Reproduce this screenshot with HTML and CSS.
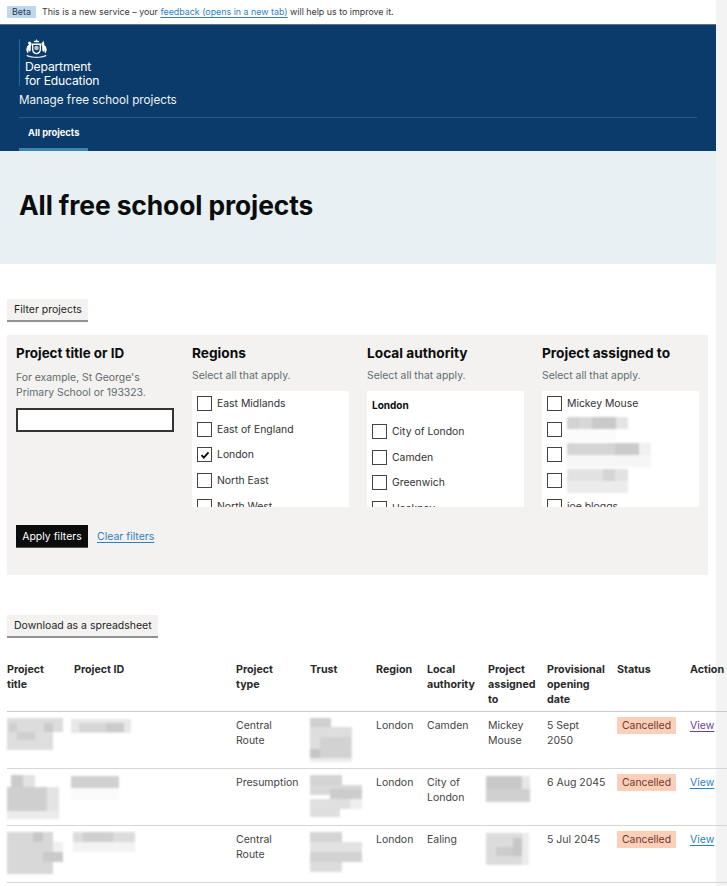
FILE: index.html
```html
<!DOCTYPE html>
<html lang="en">
<head>
<meta charset="utf-8">
<title>All free school projects</title>
<link rel="stylesheet" href="styles.css">
</head>
<body>
<div class="page">
  <div class="phase"><span class="tag">Beta</span><span>This is a new service – your <a class="link" href="#">feedback (opens in a new tab)</a> will help us to improve it.</span></div>
  <header class="masthead">
    <div class="logo">
      <svg class="crest" viewBox="0 0 24 20" aria-hidden="true"><g fill="#fff"><path d="M9.500 3.500L9 1.500l1.500.8L12 .3l1.500 2 1.500-.8-.5 2z"/><path d="M8 5.500h8v5.500c0 2.500-2 4-4 4.500-2-.5-4-2-4-4.500z" fill="none" stroke="#fff" stroke-width="1.400"/><circle cx="12" cy="9.500" r="2.400" opacity=".7"/><path d="M7 5L5.500 2.800 3.600 3l-.6 1.800 1.200.8L2 8l-.8 3.500L2.500 15l1.200-1-.5-2.500 1.300 1.800L6 12V8.500zM17 5l2.500-3.500.2 2.500 1 1.500-1 .8L22 8l.8 3.500-1.300 3.500-1.200-1 .5-2.500-1.300 1.800L18 12V8.500z"/><path d="M2 16.500c3 1.500 6.500 2.200 10 2.200s7-.7 10-2.200l.5 1.500c-3 1.500-7 2-10.500 2s-7.500-.5-10.500-2z" opacity=".9"/></g></svg>
      <div class="logo-text">Department<br>for Education</div>
    </div>
    <div class="service">Manage free school projects</div>
    <nav class="nav"><a class="nav-item" href="#">All projects</a></nav>
  </header>
  <div class="band"><h1 class="title">All free school projects</h1></div>
  <main class="main">
    <button class="btn-grey filter-toggle">Filter projects</button>
    <section class="filters">
      <div class="filter-cols">
        <div class="col col-search">
          <h2 class="col-h col-h-first">Project title or ID</h2>
          <p class="hint hint-two">For example, St George's<br>Primary School or 193323.</p>
          <input class="search" type="text" aria-label="Project title or ID">
        </div>
        <div class="col">
          <h2 class="col-h">Regions</h2>
          <p class="hint">Select all that apply.</p>
          <div class="box">
            <label class="opt"><span class="check"></span>East Midlands</label>
            <label class="opt"><span class="check"></span>East of England</label>
            <label class="opt"><span class="check"><svg class="tick" viewBox="0 0 10 10"><path d="M1.500 5.200l2.300 2.500L8.500 2.300" fill="none" stroke="#0b0c0c" stroke-width="1.800"/></svg></span>London</label>
            <label class="opt"><span class="check"></span>North East</label>
            <label class="opt"><span class="check"></span>North West</label>
          </div>
        </div>
        <div class="col">
          <h2 class="col-h">Local authority</h2>
          <p class="hint">Select all that apply.</p>
          <div class="box">
            <div class="group">London</div>
            <label class="opt"><span class="check"></span>City of London</label>
            <label class="opt"><span class="check"></span>Camden</label>
            <label class="opt"><span class="check"></span>Greenwich</label>
            <label class="opt"><span class="check"></span>Hackney</label>
          </div>
        </div>
        <div class="col">
          <h2 class="col-h">Project assigned to</h2>
          <p class="hint">Select all that apply.</p>
          <div class="box">
            <label class="opt"><span class="check"></span>Mickey Mouse</label>
            <label class="opt"><span class="check"></span><svg class="mosaic" width="62" height="24" viewBox="0 0 62 24"><rect width="12" height="12" fill="#d2d2d2"/><rect x="12" width="13" height="12" fill="#d8d8d8"/><rect x="25" width="24" height="12" fill="#c9c9c9"/><rect x="49" width="12" height="12" fill="#e4e4e4"/><rect y="12" width="49" height="12" fill="#fbfbfb"/></svg></label>
            <label class="opt"><span class="check"></span><svg class="mosaic" width="86" height="24" viewBox="0 0 86 24"><rect width="48" height="12" fill="#d4d4d4"/><rect x="48" width="24" height="12" fill="#cbcbcb"/><rect x="72" width="12" height="12" fill="#f0f0f0"/><rect y="12" width="84" height="12" fill="#f6f6f6"/></svg></label>
            <label class="opt"><span class="check"></span><svg class="mosaic" width="62" height="24" viewBox="0 0 62 24"><rect width="36" height="12" fill="#e2e2e2"/><rect x="36" width="12" height="12" fill="#d4d4d4"/><rect x="48" width="13" height="12" fill="#e2e2e2"/><rect y="12" width="61" height="12" fill="#ececec"/></svg></label>
            <label class="opt"><span class="check"></span>joe bloggs</label>
          </div>
        </div>
      </div>
      <div class="actions">
        <button class="btn-black">Apply filters</button>
        <a class="link" href="#">Clear filters</a>
      </div>
    </section>
    <button class="btn-grey download">Download as a spreadsheet</button>
    <table class="projects">
      <colgroup><col class="c1"><col class="c2"><col class="c3"><col class="c4"><col class="c5"><col class="c6"><col class="c7"><col class="c8"><col class="c9"><col class="c10"></colgroup>
      <thead>
        <tr><th>Project title</th><th>Project ID</th><th>Project type</th><th>Trust</th><th>Region</th><th>Local authority</th><th>Project assigned to</th><th>Provisional opening date</th><th>Status</th><th>Action</th></tr>
      </thead>
      <tbody>
        <tr>
          <td><svg class="mosaic" width="56" height="32" viewBox="0 0 56 32"><rect width="56" height="14" fill="#dcdcdc"/><rect x="2" y="5" width="8" height="9" fill="#cfcfcf"/><rect x="37" y="5" width="9" height="9" fill="#cbcbcb"/><rect y="14" width="46" height="18" fill="#dedede"/><rect x="10" y="14" width="18" height="8" fill="#d0d0d0"/></svg></td>
          <td><svg class="mosaic shift-id" width="60" height="14" viewBox="0 0 60 14"><rect width="60" height="14" fill="#e8e8e8"/><rect x="8" y="4" width="45" height="9" fill="#d6d6d6"/><rect x="35" y="4" width="18" height="9" fill="#cbcbcb"/></svg></td>
          <td>Central Route</td>
          <td><svg class="mosaic" width="42" height="44" viewBox="0 0 42 44"><rect width="21" height="9" fill="#cfcfcf"/><rect y="9" width="42" height="31" fill="#dedede"/><rect x="10" y="19" width="31" height="21" fill="#d2d2d2"/><rect y="31" width="10" height="9" fill="#c6c6c6"/><rect y="40" width="42" height="4" fill="#ececec"/></svg></td>
          <td>London</td><td>Camden</td><td>Mickey Mouse</td><td>5 Sept 2050</td>
          <td><span class="status">Cancelled</span></td>
          <td><a class="link visited" href="#">View</a></td>
        </tr>
        <tr>
          <td><svg class="mosaic" width="52" height="44" viewBox="0 0 52 44"><rect x="4" width="12" height="12" fill="#cbcbcb"/><rect x="16" width="12" height="12" fill="#e2e2e2"/><rect y="12" width="40" height="24" fill="#cfcfcf"/><rect x="40" y="12" width="12" height="24" fill="#e4e4e4"/><rect y="36" width="52" height="8" fill="#ebebeb"/></svg></td>
          <td><svg class="mosaic shift-id" width="48" height="24" viewBox="0 0 48 24"><rect width="48" height="12" fill="#d0d0d0"/><rect y="12" width="48" height="12" fill="#fafafa"/></svg></td>
          <td>Presumption</td>
          <td><svg class="mosaic" width="52" height="42" viewBox="0 0 52 42"><rect width="32" height="10" fill="#d4d4d4"/><rect y="10" width="52" height="10" fill="#d8d8d8"/><rect x="20" y="14" width="32" height="10" fill="#cccccc"/><rect y="24" width="40" height="10" fill="#e0e0e0"/><rect x="40" y="24" width="12" height="10" fill="#eeeeee"/><rect y="34" width="30" height="8" fill="#dedede"/></svg></td>
          <td>London</td><td>City of London</td>
          <td><svg class="mosaic shift-as" width="44" height="26" viewBox="0 0 44 26"><rect width="36" height="13" fill="#c9c9c9"/><rect x="36" width="8" height="13" fill="#e6e6e6"/><rect y="13" width="44" height="13" fill="#d0d0d0"/></svg></td>
          <td>6 Aug 2045</td>
          <td><span class="status">Cancelled</span></td>
          <td><a class="link" href="#">View</a></td>
        </tr>
        <tr>
          <td><svg class="mosaic" width="56" height="42" viewBox="0 0 56 42"><rect width="46" height="42" fill="#d8d8d8"/><rect x="26" y="0" width="10" height="10" fill="#c8c8c8"/><rect x="36" y="20" width="20" height="10" fill="#cacaca"/><rect x="46" y="10" width="10" height="10" fill="#f0f0f0"/></svg></td>
          <td><svg class="mosaic shift-id2" width="62" height="20" viewBox="0 0 62 20"><rect width="62" height="10" fill="#dcdcdc"/><rect x="10" width="30" height="10" fill="#cfcfcf"/><rect y="10" width="62" height="10" fill="#f3f3f3"/></svg></td>
          <td>Central Route</td>
          <td><svg class="mosaic" width="52" height="42" viewBox="0 0 52 42"><rect width="32" height="10" fill="#d4d4d4"/><rect y="10" width="52" height="10" fill="#e2e2e2"/><rect y="20" width="52" height="10" fill="#d2d2d2"/><rect y="30" width="32" height="10" fill="#dcdcdc"/></svg></td>
          <td>London</td><td>Ealing</td>
          <td><svg class="mosaic shift-as" width="43" height="32" viewBox="0 0 43 32"><rect width="36" height="32" fill="#dcdcdc"/><rect x="27" y="5" width="9" height="18" fill="#c6c6c6"/><rect x="10" y="14" width="17" height="9" fill="#cccccc"/><rect x="36" width="7" height="32" fill="#ececec"/></svg></td>
          <td>5 Jul 2045</td>
          <td><span class="status">Cancelled</span></td>
          <td><a class="link" href="#">View</a></td>
        </tr>
      </tbody>
    </table>
  </main>
</div>
</body>
</html>
```

FILE: styles.css
```css
* { box-sizing: border-box; }
html, body { margin: 0; height: 100%; }
body {
  font-family: Inter, "Liberation Sans", sans-serif;
  font-size: 11px;
  color: #3a3a3a;
  background: #f3f3f3;
  overflow: hidden;
}
.page { width: 716px; height: 886px; background: #fff; }
.link { color: #2f7fc1; text-decoration: underline; text-underline-offset: 2px; }
.visited { color: #6a3fa0; }

.phase { height: 25px; display: flex; align-items: center; gap: 6px; padding: 0 7px 1px; font-size: 8.9px; white-space: nowrap; border-bottom: 1px solid #5a7186; }
.tag { background: #bfd8ec; color: #1d3a55; padding: 2px 5px; line-height: 8px; height: 12px; }

.masthead { background: #0b3b6a; height: 126px; padding: 14px 19px 0; color: #fff; }
.logo { border-left: 1px solid #1e6fa8; padding-left: 5px; height: 47px; }
.crest { display: block; width: 23px; height: 19px; }
.logo-text { font-size: 12.2px; line-height: 13.5px; margin-top: 2px; letter-spacing: -.2px; }
.service { font-size: 11.7px; line-height: 16px; margin-top: 6px; color: #eef3f7; }
.nav { margin-top: 9px; border-top: 1px solid #2a5a8a; width: 678px; }
.nav-item { display: block; width: 69px; height: 34px; padding: 9px 0 0 9px; color: #fff; font-size: 9.3px; font-weight: 700; line-height: 12px; text-decoration: none; border-bottom: 4px solid #3d84b0; }

.band { background: #e8f0f4; height: 113px; padding: 36px 19px 0; }
.title { margin: 0; font-size: 26.4px; line-height: 36px; font-weight: 700; color: #0b0c0c; letter-spacing: -.1px; }

.main { padding: 35px 8px 0 7px; }
.btn-grey { display: block; font: inherit; font-size: 10.5px; color: #1f1f1f; background: #f3f2f1; border: 0; border-bottom: 2px solid #929191; padding: 0 7px; height: 23px; white-space: nowrap; text-align: left; }
.filter-toggle { width: 81px; }
.download { width: 151px; margin-top: 40px; }

.filters { margin-top: 13px; height: 240px; background: #f3f2f1; padding: 11px 9px 0; }
.filter-cols { display: grid; grid-template-columns: 176px repeat(3, 175px); height: 179px; }
.col-h { margin: 0; font-size: 13.7px; line-height: 15px; font-weight: 700; color: #0b0c0c; }
.col-h-first { font-size: 13.4px; }
.hint { margin: 8px 0 0; font-size: 10.4px; line-height: 14px; height: 22px; color: #626a6e; }
.hint-two { height: 36px; margin-top: 9px; line-height: 15px; }
.search { display: block; width: 158px; height: 24px; border: 2px solid #333; background: #fff; border-radius: 0; padding: 0; margin: 0; }
.col-search .search { margin-top: 2px; }
.box { width: 157px; height: 116px; background: #fff; overflow: hidden; padding: 0 5px; }
.opt { display: flex; align-items: center; gap: 5px; height: 25.6px; font-size: 10.4px; color: #333; white-space: nowrap; }
.check { flex: none; width: 15px; height: 15px; border: 1.5px solid #444; background: #fff; display: flex; align-items: center; justify-content: center; }
.tick { width: 10px; height: 10px; }
.group { font-size: 10px; font-weight: 700; color: #0b0c0c; height: 28px; line-height: 28px; }
.actions { display: flex; align-items: center; gap: 9px; font-size: 10.5px; }
.btn-black { font: inherit; color: #fff; background: #0b0c0c; border: 0; border-bottom: 1px solid #555; width: 72px; height: 23px; padding: 0; }

.projects { margin-top: 21px; width: 720px; table-layout: fixed; border-collapse: collapse; }
.c1 { width: 67px; } .c2 { width: 162px; } .c3 { width: 74px; } .c4 { width: 66px; } .c5 { width: 51px; }
.c6 { width: 61px; } .c7 { width: 59px; } .c8 { width: 70px; } .c9 { width: 73px; } .c10 { width: 37px; }
.projects th { text-align: left; vertical-align: top; font-size: 10.7px; line-height: 15px; font-weight: 700; color: #2a2a2a; padding: 3px 11px 4px 0; border-bottom: 1px solid #c9c9c9; height: 52px; }
.projects th:nth-child(n+5) { padding-right: 2px; }
.projects th:last-child { padding-right: 0; }
.projects td { vertical-align: top; font-size: 10.5px; line-height: 15px; padding: 6px 11px 0 0; height: 57px; border-bottom: 1px solid #d6d6d6; color: #444; }
.projects td:nth-child(n+5) { padding-right: 2px; }
.projects td:nth-child(8) { padding-right: 11px; }
.mosaic { display: block; filter: blur(.8px); }
.status { display: inline-block; background: #fccfba; color: #6e3a28; padding: 0 5px; margin-top: -1px; height: 17px; line-height: 17px; white-space: nowrap; font-size: 10.4px; }
.shift-id { margin-left: -3px; margin-top: 1px; }
.shift-id2 { margin-left: -1px; }
.shift-as { margin-left: -2px; margin-top: 1px; }
```
